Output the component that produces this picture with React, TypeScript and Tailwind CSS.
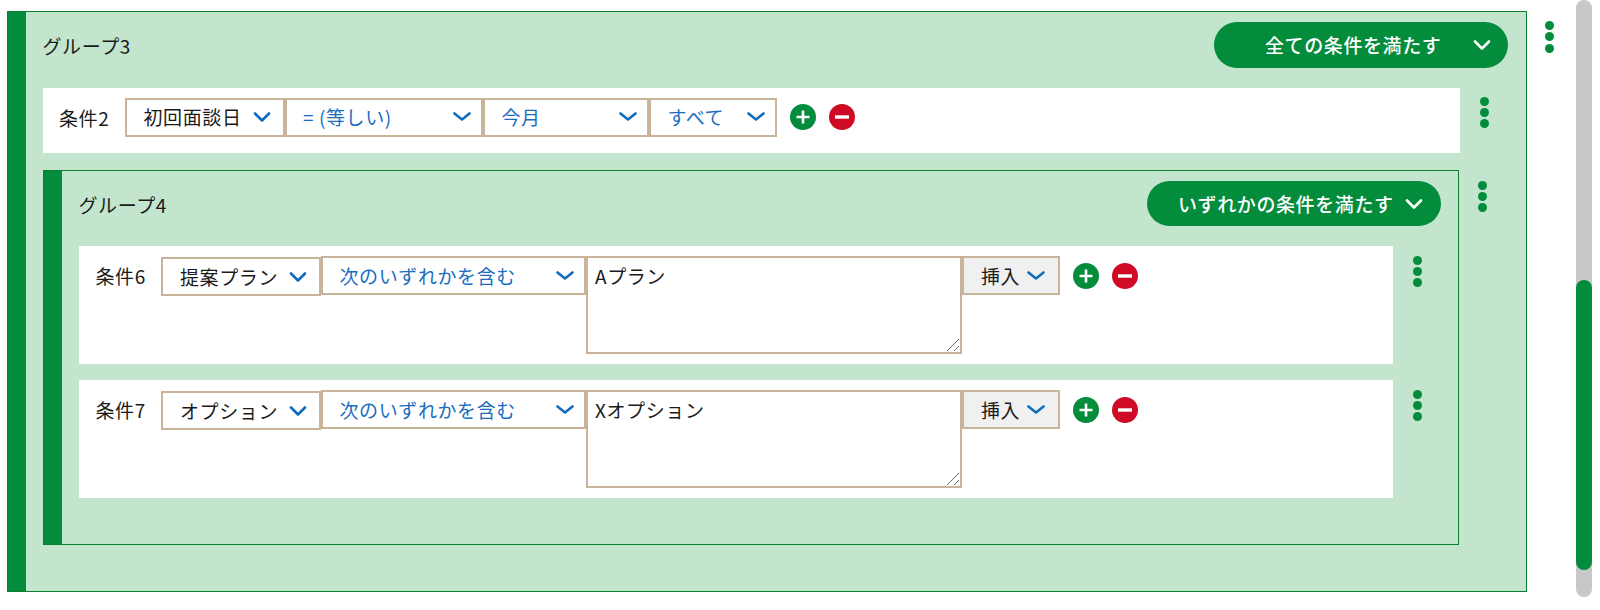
import React from 'react';

const GREEN = '#038c3c';

const Chevron = ({ color = '#0f6cbd', tall = false }: { color?: string; tall?: boolean }) => (
  <svg width="18" height={tall ? 12 : 10} viewBox={tall ? '0 0 18 12' : '0 0 18 10'} fill="none" className="shrink-0">
    <path
      d={tall ? 'M2 2.5 L9 9.5 L16 2.5' : 'M1.5 1.5 L9 7.5 L16.5 1.5'}
      stroke={color}
      strokeWidth="2.6"
      strokeLinecap="round"
      strokeLinejoin="round"
    />
  </svg>
);

const Kebab = ({ className = '' }: { className?: string }) => (
  <div className={`flex flex-col gap-[2.3px] ${className}`}>
    <div className="w-[9px] h-[9px] rounded-full bg-[#038c3c]" />
    <div className="w-[9px] h-[9px] rounded-full bg-[#038c3c]" />
    <div className="w-[9px] h-[9px] rounded-full bg-[#038c3c]" />
  </div>
);

const RoundButtons = ({ className = 'mt-[6px]' }: { className?: string }) => (
  <div className={`flex items-center gap-[13px] ml-[13px] ${className}`}>
    <svg width="26" height="26" viewBox="0 0 26 26">
      <circle cx="13" cy="13" r="13" fill={GREEN} />
      <path d="M13 6.5 V19.5 M6.5 13 H19.5" stroke="#fff" strokeWidth="2.6" />
    </svg>
    <svg width="26" height="26" viewBox="0 0 26 26">
      <circle cx="13" cy="13" r="13" fill="#cf0a25" />
      <path d="M6 13 H20" stroke="#fff" strokeWidth="3.4" />
    </svg>
  </div>
);

const Select = ({
  label,
  width,
  pad,
  value = false,
  gray = false,
  className = '',
}: {
  label: string;
  width: string;
  pad: string;
  value?: boolean;
  gray?: boolean;
  className?: string;
}) => (
  <div
    className={`flex items-center justify-between h-[39px] border-2 border-[#c9b39b] shrink-0 ${width} ${pad} ${
      gray ? 'bg-[#f0f0f0] pr-[13px]' : value ? 'bg-white pr-[12px]' : 'bg-white pr-[10px]'
    } ${className}`}
  >
    <span className={value ? 'text-[#1a1a1a]' : 'text-[#1a6dbf]'}>{label}</span>
    <Chevron tall={value && !gray} />
  </div>
);

const Pill = ({ label, pad }: { label: string; pad: string }) => (
  <div className={`flex items-center h-[45.5px] w-[294px] rounded-full bg-[#038c3c] text-white font-medium ${pad}`}>
    <span className="flex-1">{label}</span>
    <Chevron color="#ffffff" tall />
  </div>
);

const Condition = ({ name, field, text }: { name: string; field: string; text: string }) => (
  <div className="flex items-start">
    <div className="flex items-start w-[1314px] h-[118px] bg-white pt-[10px] pl-[17px]">
      <span className="w-[65.5px] mt-[7px] shrink-0 text-[#1a1a1a]">{name}</span>
      <Select label={field} width="w-[160px]" pad="pl-[17px]" value className="mt-[1px]" />
      <Select label="次のいずれかを含む" width="w-[265px]" pad="pl-[16.5px]" />
      <div className="relative shrink-0 w-[376px] h-[98px]">
        <textarea
          readOnly
          defaultValue={text}
          className="block w-full h-full border-2 border-[#c9b39b] pl-[7px] pt-[5px] outline-none resize-none text-[#1a1a1a] bg-white"
        />
        {/* resize grip */}
        <svg width="14" height="14" viewBox="0 0 14 14" className="absolute right-[2px] bottom-[2px]">
          <path d="M1 13 L13 1 M8 13 L13 8" stroke="#6b6b6b" strokeWidth="1" />
        </svg>
      </div>
      <Select label="挿入" width="w-[98px]" pad="pl-[17px]" value gray />
      <RoundButtons className="mt-[7px]" />
    </div>
    <Kebab className="ml-[20px] mt-[9.5px]" />
  </div>
);

const Group = ({ className, children }: { className: string; children: React.ReactNode }) => (
  <div className={`flex shrink-0 border border-[#0c7f2e] bg-[#c3e5cd] ${className}`}>
    <div className="w-[18.5px] bg-[#038c3c] shrink-0" />
    <div className="flex-1 flex flex-col">{children}</div>
  </div>
);

export default function App() {
  return (
    <div
      className="flex items-start w-[1600px] h-[610px] bg-white overflow-hidden text-[19px] leading-[26px] tracking-[0.6px]"
      style={{ fontFamily: '"Noto Sans CJK JP", "Noto Sans", sans-serif' }}
    >
      <div className="flex items-start pl-[6.5px] pt-[11px]">
        <Group className="w-[1520px] h-[581px]">
          <div className="flex items-center justify-between h-[45.5px] mt-[10px] mb-[20px] pl-[16.5px] pr-[17.5px]">
            <span className="text-[#1a1a1a] mt-[2px]">グループ3</span>
            <Pill label="全ての条件を満たす" pad="pl-[51px] pr-[17px]" />
          </div>

          <div className="flex items-start ml-[16.5px]">
            <div className="flex items-start w-[1417px] h-[65.5px] bg-white pt-[10px] pl-[16.5px]">
              <span className="w-[66px] mt-[7px] shrink-0 text-[#1a1a1a]">条件2</span>
              <Select label="初回面談日" width="w-[160px]" pad="pl-[16.5px]" value />
              <Select label="= (等しい)" width="w-[197.5px]" pad="pl-[16px]" />
              <Select label="今月" width="w-[166px]" pad="pl-[17px]" />
              <Select label="すべて" width="w-[128px]" pad="pl-[17px]" />
              <RoundButtons />
            </div>
            <Kebab className="ml-[20px] mt-[9px]" />
          </div>

          <div className="flex items-start ml-[16.5px] mt-[16.5px]">
            <Group className="w-[1416px] h-[375.5px]">
              <div className="flex items-center justify-between h-[45px] mt-[10.5px] mb-[20px] pl-[16.5px] pr-[16.5px]">
                <span className="text-[#1a1a1a] mt-[2px]">グループ4</span>
                <Pill label="いずれかの条件を満たす" pad="pl-[31px] pr-[18px]" />
              </div>
              <div className="flex flex-col gap-[16px] ml-[16.5px]">
                <Condition name="条件6" field="提案プラン" text="Aプラン" />
                <Condition name="条件7" field="オプション" text="Xオプション" />
              </div>
            </Group>
            <Kebab className="ml-[19px] mt-[11px]" />
          </div>
        </Group>
        <Kebab className="ml-[18px] mt-[10px]" />
      </div>

      <div className="w-[16px] h-[597px] ml-[22px] rounded-full bg-[#c8c8c8] shrink-0 overflow-hidden">
        <div className="w-[16px] h-[290px] mt-[280px] rounded-full bg-[#038c3c]" />
      </div>
    </div>
  );
}
